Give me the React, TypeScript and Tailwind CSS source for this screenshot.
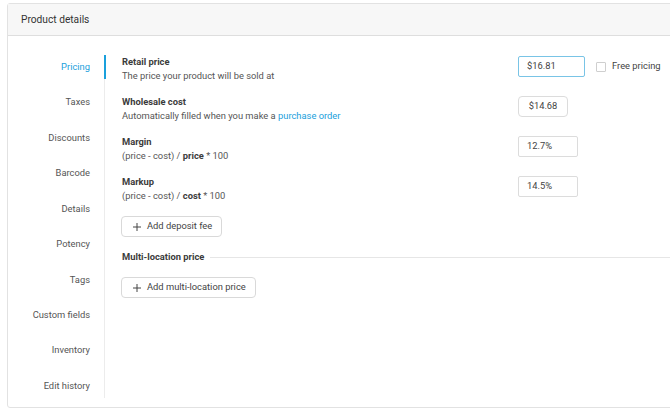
import React from "react";

const navItems = [
  "Pricing",
  "Taxes",
  "Discounts",
  "Barcode",
  "Details",
  "Potency",
  "Tags",
  "Custom fields",
  "Inventory",
  "Edit history",
];

function PlusIcon() {
  return (
    <svg width="8" height="8" viewBox="0 0 8 8" className="shrink-0">
      <path d="M4 0v8M0 4h8" stroke="#444" strokeWidth="1" fill="none" />
    </svg>
  );
}

function Row({
  label,
  children,
  right,
}: {
  label: string;
  children: React.ReactNode;
  right: React.ReactNode;
}) {
  return (
    <div className="flex items-start">
      <div className="w-[396px] shrink-0">
        <div className="h-[14px] leading-[14px] font-bold text-[#3b3b3b]">{label}</div>
        <div className="h-[14px] leading-[14px] text-[#555]">{children}</div>
      </div>
      <div className="mt-[1px] flex items-center">{right}</div>
    </div>
  );
}

export default function App() {
  return (
    <div className="w-[670px] h-[416px] overflow-hidden bg-white font-['Roboto',sans-serif] text-[9.35px]">
      <div className="ml-[7px] mt-[3px] w-[700px] h-[405px] border border-[#e2e2e2] rounded-[3px] flex flex-col">
        <div className="h-[32px] shrink-0 bg-[#f7f7f7] border-b border-[#dedede] pl-[13px] flex items-center text-[10.2px] text-[#333]">
          Product details
        </div>
        <div className="flex pt-[19px]">
          <nav className="w-[97px] shrink-0 border-r border-[#ececec] flex flex-col gap-[11.44px]">
            {navItems.map((item, i) => (
              <div
                key={item}
                className={
                  i === 0
                    ? "relative h-[24px] flex items-center justify-end pr-[14px] text-[#1aa0dc]"
                    : "h-[24px] flex items-center justify-end pr-[14px] text-[#555]"
                }
              >
                {item}
                {i === 0 && (
                  <span className="absolute right-[-2px] top-0 h-[24px] w-[2px] bg-[#1aa0dc]" />
                )}
              </div>
            ))}
          </nav>
          <div className="flex-1 pl-[17px] flex flex-col">
            <div className="flex flex-col gap-[12px]">
              <Row
                label="Retail price"
                right={
                  <>
                    <div className="w-[67px] h-[21px] border border-[#79c4e6] rounded-[2px] pl-[8px] flex items-center text-[#444]">
                      $16.81
                    </div>
                    <div className="ml-[11px] w-[10px] h-[10px] border border-[#cfcfcf] rounded-[1px] bg-white" />
                    <span className="ml-[6px] text-[#444]">Free pricing</span>
                  </>
                }
              >
                The price your product will be sold at
              </Row>
              <Row
                label="Wholesale cost"
                right={
                  <div className="w-[50px] h-[21px] border border-[#dcdcdc] rounded-[4px] flex items-center justify-center text-[#444]">
                    $14.68
                  </div>
                }
              >
                Automatically filled when you make a{" "}
                <span className="text-[#1aa0dc]">purchase order</span>
              </Row>
              <Row
                label="Margin"
                right={
                  <div className="w-[60px] h-[21px] border border-[#dcdcdc] rounded-[2px] pl-[8px] flex items-center text-[#444]">
                    12.7%
                  </div>
                }
              >
                (price - cost) / <span className="font-bold text-[#3b3b3b]">price</span> * 100
              </Row>
              <Row
                label="Markup"
                right={
                  <div className="w-[60px] h-[21px] border border-[#dcdcdc] rounded-[2px] pl-[8px] flex items-center text-[#444]">
                    14.5%
                  </div>
                }
              >
                (price - cost) / <span className="font-bold text-[#3b3b3b]">cost</span> * 100
              </Row>
            </div>
            <button className="mt-[13px] -ml-[1px] self-start h-[21px] border border-[#d9d9d9] rounded-[4px] pl-[11px] pr-[9px] flex items-center gap-[6px] text-[#444] bg-white">
              <PlusIcon />
              Add deposit fee
            </button>
            <div className="mt-[13px] h-[14px] flex items-center">
              <span className="font-bold text-[#3b3b3b] leading-[14px]">Multi-location price</span>
              <div className="ml-[6px] flex-1 h-px bg-[#e6e6e6]" />
            </div>
            <button className="mt-[13px] -ml-[1px] self-start h-[21px] border border-[#d9d9d9] rounded-[4px] pl-[11px] pr-[9px] flex items-center gap-[6px] text-[#444] bg-white">
              <PlusIcon />
              Add multi-location price
            </button>
          </div>
        </div>
      </div>
    </div>
  );
}
